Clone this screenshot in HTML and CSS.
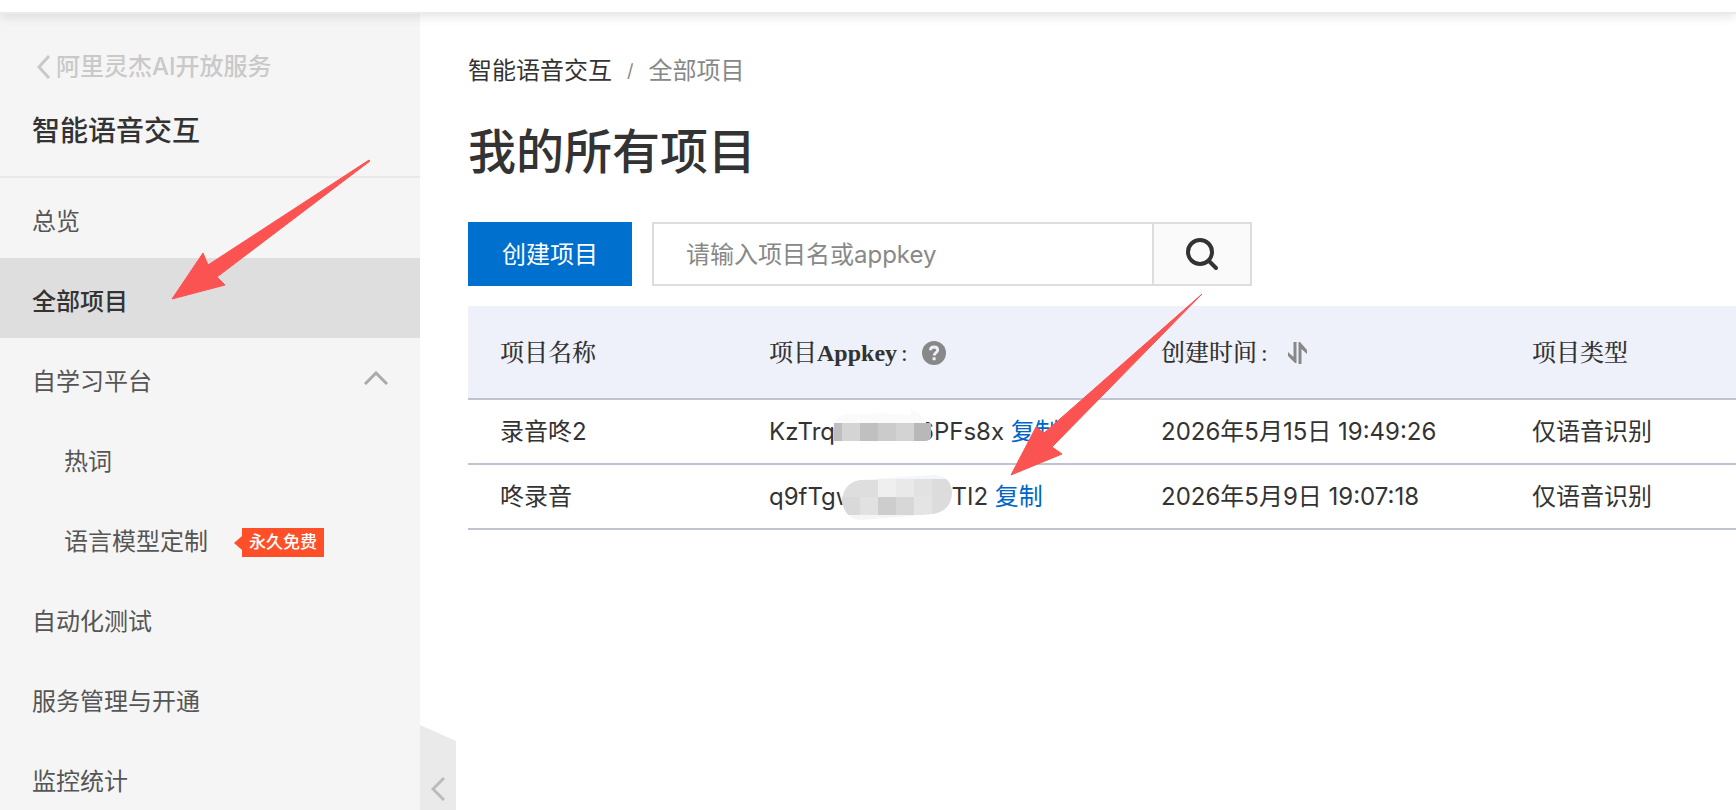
FILE: index.html
```html
<!DOCTYPE html>
<html lang="zh-CN">
<head>
<meta charset="utf-8">
<title>智能语音交互 - 全部项目</title>
<link rel="stylesheet" href="styles.css">
</head>
<body>
<header class="topbar"></header>
<div class="layout">
  <aside class="sidebar">
    <a class="back" href="#">
      <svg class="back-icon" width="15" height="24" viewBox="0 0 15 24" aria-hidden="true"><path d="M13 1 3 12l10 11" fill="none" stroke="currentColor" stroke-width="3"/></svg>
      <span>阿里灵杰AI开放服务</span>
    </a>
    <h2 class="product">智能语音交互</h2>
    <nav class="menu">
      <a class="item" href="#">总览</a>
      <a class="item active" href="#">全部项目</a>
      <a class="item" href="#">自学习平台
        <svg class="chevron" width="24" height="14" viewBox="0 0 24 14" aria-hidden="true"><path d="M1 13 12 2l11 11" fill="none" stroke="currentColor" stroke-width="3"/></svg>
      </a>
      <a class="item sub" href="#">热词</a>
      <a class="item sub" href="#">语言模型定制 <span class="tag">永久免费</span></a>
      <a class="item" href="#">自动化测试</a>
      <a class="item" href="#">服务管理与开通</a>
      <a class="item" href="#">监控统计</a>
    </nav>
    <button class="collapse" type="button" aria-label="收起菜单">
      <svg width="14" height="24" viewBox="0 0 14 24" aria-hidden="true"><path d="M13 1 2 12l11 11" fill="none" stroke="currentColor" stroke-width="3"/></svg>
    </button>
  </aside>
  <main class="content">
    <nav class="crumbs"><a href="#">智能语音交互</a><span class="slash">/</span><span class="current">全部项目</span></nav>
    <h1 class="title">我的所有项目</h1>
    <form class="toolbar">
      <button class="create" type="button">创建项目</button>
      <div class="search">
        <input class="search-input" type="text" placeholder="请输入项目名或appkey" aria-label="搜索项目">
        <button class="search-button" type="button" aria-label="搜索">
          <svg width="34" height="34" viewBox="0 0 34 34" aria-hidden="true"><circle cx="15" cy="15" r="12" fill="none" stroke="currentColor" stroke-width="4"/><path d="m24 24 7 7" stroke="currentColor" stroke-width="4" stroke-linecap="round"/></svg>
        </button>
      </div>
    </form>
    <table class="projects">
      <colgroup><col class="col-name"><col class="col-key"><col class="col-time"><col></colgroup>
      <thead>
        <tr>
          <th scope="col">项目名称</th>
          <th scope="col"><span class="head">项目<b>Appkey</b><span class="colon">:</span>
            <svg class="help" width="24" height="24" viewBox="0 0 24 24" aria-hidden="true"><circle cx="12" cy="12" r="12" fill="#888"/><path d="M8.400 9.300c0-2 1.500-3.300 3.600-3.300 2.200 0 3.700 1.200 3.700 3 0 2.600-3.500 2.500-3.500 5.400" fill="none" stroke="#eff1fa" stroke-width="2.800"/><path d="M10.600 16.300h3v2.900h-3z" fill="#eff1fa"/></svg></span></th>
          <th scope="col"><span class="head">创建时间<span class="colon">:</span>
            <svg class="sort" width="19" height="22" viewBox="0 0 19 22" aria-hidden="true"><path d="M5.500 0h3v21H7L0 14v-4l5.500 5zM10.500 22h3V7L19 12V8l-7-8h-1.500z" fill="#888"/></svg></span></th>
          <th scope="col">项目类型</th>
        </tr>
      </thead>
      <tbody>
        <tr>
          <td>录音咚2</td>
          <td><span class="key">KzTrq<svg class="mask mask-first" width="102" height="46" viewBox="0 0 102 46" aria-hidden="true"><path d="M3 14Q8 6 18 5h29v-1l34 2V1q16 5 16 18H3z" fill="#fafafa"/><path d="M4 14h8v18H4z" fill="#bebebe"/><path d="M12 14h18v18H12z" fill="#d4d4d4"/><path d="M30 14h18v18H30z" fill="#c0c0c0"/><path d="M48 14h18v18H48z" fill="#cbcbcb"/><path d="M66 14h18v18H66z" fill="#d3d3d3"/><path d="M84 14h17v14q-1 4-6 4H84z" fill="#b8b8b8"/></svg>6PFs8x <a href="#">复制</a></span></td>
          <td>2026年5月15日 19:49:26</td>
          <td>仅语音识别</td>
        </tr>
        <tr>
          <td>咚录音</td>
          <td><span class="key">q9fTgw<svg class="mask mask-second" width="112" height="48" viewBox="0 0 112 48" aria-hidden="true"><defs><clipPath id="blob"><path d="M19 7 92 2q18 0 19 18-1 18-19 21L20 47Q4 46 1 29 2 10 19 7z"/></clipPath></defs><g clip-path="url(#blob)"><path d="M0 0h112v48H0z" fill="#f4f5f7"/><path d="M0 7h37v17H0z" fill="#dedede"/><path d="M0 24h19v18H0z" fill="#d9d9d9"/><path d="M19 24h18v18H19z" fill="#e1e1e1"/><path d="M37 6h18v18H37z" fill="#efefef"/><path d="M55 6h18v18H55z" fill="#e9e9e9"/><path d="M73 6h18v18H73z" fill="#e2e2e2"/><path d="M91 6h21v36H91z" fill="#dcdcdc"/><path d="M37 24h18v18H37z" fill="#cdcdcd"/><path d="M55 24h18v18H55z" fill="#d7d7d7"/><path d="M73 24h18v18H73z" fill="#e4e4e4"/></g></svg>TI2 <a href="#">复制</a></span></td>
          <td>2026年5月9日 19:07:18</td>
          <td>仅语音识别</td>
        </tr>
      </tbody>
    </table>
  </main>
</div>
<svg class="arrows" width="1220" height="490" viewBox="0 0 1220 490" aria-hidden="true">
  <g fill="#fb5351" stroke="#fb5351" stroke-linejoin="round">
    <path d="M172 299 203 253l5 12L369 160l1 1L217 277l8 8z"/>
    <path d="M1011 475 1036 427l8 6L1202 294 1052 447l10 7z"/>
  </g>
</svg>
</body>
</html>
```
FILE: styles.css
```css
* { box-sizing: border-box; }

body {
  margin: 0;
  height: 100vh;
  display: flex;
  flex-direction: column;
  overflow: hidden;
  background: #fff;
  color: #333;
  font: 24px/32px Inter, "Noto Sans CJK SC", sans-serif;
}

a { color: inherit; text-decoration: none; }
svg { flex: none; }
button, input { font: inherit; border-radius: 0; }

.topbar {
  position: relative;
  z-index: 1;
  flex: none;
  height: 12px;
  background: #fff;
  box-shadow: 0 2px 0 #e9e9ef, 0 4px 12px rgba(0, 0, 0, .12);
}

.layout { flex: 1; display: flex; min-height: 0; }

.sidebar {
  position: relative;
  flex: none;
  display: flex;
  flex-direction: column;
  width: 420px;
  background: #f5f5f5;
}

.back {
  display: flex;
  align-items: center;
  gap: 5px;
  padding: 39px 0 0 36px;
  color: #c9c9c9;
  font-weight: 500;
}

.product {
  margin: 0;
  padding: 28px 32px 25px;
  border-bottom: 2px solid #e9e9e9;
  font-size: 28px;
  line-height: 40px;
  font-weight: 500;
}

.menu { flex: 1; min-height: 0; overflow: hidden; }
.item {
  display: flex;
  align-items: center;
  height: 80px;
  padding: 8px 32px 0;
  color: #555;
}
.item.active { background: #dedede; color: #333; font-weight: 500; }
.item.sub { padding-left: 64px; }
.chevron { margin: 0 0 8px auto; color: #aaa; }

.tag {
  position: relative;
  margin-left: 34px;
  padding: 0 7px;
  background: #ff4f28;
  color: #fff;
  font-size: 17px;
  line-height: 29px;
  font-weight: 500;
}
.tag::before {
  content: "";
  position: absolute;
  left: -8px;
  top: 8px;
  border: solid transparent;
  border-width: 7px 8px 7px 0;
  border-right-color: #ff4f28;
}

.collapse {
  position: absolute;
  left: 100%;
  bottom: 0;
  width: 36px;
  height: 85px;
  padding: 42px 0 0;
  border: 0;
  background: #eaeaea;
  clip-path: polygon(0 0, 100% 16px, 100% 100%, 0 100%);
  color: #bbb;
}
.collapse svg { display: block; margin: 0 auto; }

.content { flex: 1; min-width: 0; padding: 43px 0 0 48px; }

.crumbs { display: flex; line-height: 32px; }
.slash { margin: 0 15px; font-size: 18px; color: #888; }
.current { color: #888; }

.title {
  margin: 33px 0 38px;
  font-size: 48px;
  line-height: 64px;
  font-weight: 500;
}

.toolbar { display: flex; gap: 20px; margin-bottom: 20px; }
.create {
  width: 164px;
  height: 64px;
  padding: 2px 0 0;
  border: 0;
  background: #0070cf;
  color: #fff;
}
.search { display: flex; width: 600px; height: 64px; border: 2px solid #ddd; }
.search-input {
  flex: 1;
  min-width: 0;
  padding: 2px 32px 0;
  border: 0;
  background: #fff;
  color: #333;
}
.search-input::placeholder { color: #888; opacity: 1; }
.search-button {
  display: flex;
  align-items: center;
  justify-content: center;
  width: 98px;
  padding: 0;
  border: 0;
  border-left: 2px solid #ddd;
  background: #fafafa;
  color: #333;
}

.projects { width: 100%; table-layout: fixed; border-collapse: collapse; }
.col-name { width: 269px; }
.col-key { width: 392px; }
.col-time { width: 371px; }
.projects th, .projects td {
  padding: 0 0 0 32px;
  border-bottom: 2px solid #c0c4d0;
  text-align: left;
  white-space: nowrap;
}
.projects th {
  height: 93px;
  padding-top: 2px;
  background: #eff1fa;
  font-family: "Liberation Serif", "Noto Serif CJK SC", "Noto Sans CJK SC", serif;
  font-weight: 500;
}
.projects td { height: 65px; }
.head { display: flex; align-items: center; }
.colon { margin-left: 4px; }
.help { margin-left: 14px; }
.sort { margin-left: 20px; }

.key { display: flex; align-items: center; white-space: pre; }
.key a { color: #0064c8; }
.mask { position: relative; }
.mask-first { margin: -7px -13px -7px -5px; }
.mask-second { margin: -8px -2px -8px -14px; }

.arrows { position: absolute; left: 0; top: 0; z-index: 2; pointer-events: none; }
```
